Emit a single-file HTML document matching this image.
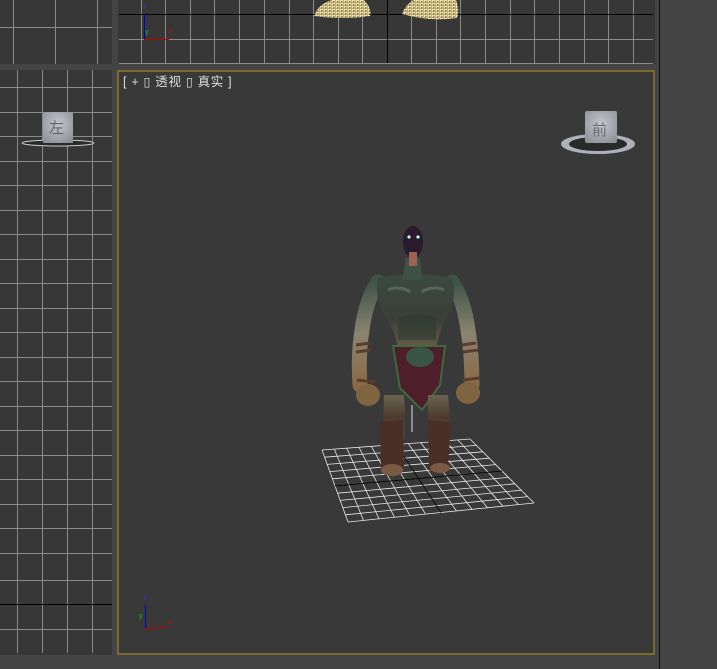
<!DOCTYPE html>
<html><head><meta charset="utf-8"><style>
html,body{margin:0;padding:0;width:717px;height:669px;overflow:hidden;background:#444;font-family:"Liberation Sans","Noto Sans CJK SC",sans-serif}
.abs{position:absolute}
</style></head><body>
<svg class="abs" style="left:0;top:0" width="717" height="669" viewBox="0 0 717 669">
<defs>
<linearGradient id="sk" x1="0" y1="0" x2="0" y2="1"><stop offset="0" stop-color="#3a4a40"/><stop offset="0.6" stop-color="#3a4036"/><stop offset="1" stop-color="#6a5e4a"/></linearGradient>
<linearGradient id="arm" x1="0" y1="0" x2="0" y2="1"><stop offset="0" stop-color="#3e5446"/><stop offset="0.5" stop-color="#8a8470"/><stop offset="1" stop-color="#8a6a44"/></linearGradient>
<linearGradient id="leg" x1="0" y1="0" x2="0" y2="1"><stop offset="0" stop-color="#6a6450"/><stop offset="0.5" stop-color="#4e3a2c"/><stop offset="1" stop-color="#6a4c38"/></linearGradient>
<radialGradient id="cube" cx="0.5" cy="0.4" r="0.7"><stop offset="0" stop-color="#c4c6cc"/><stop offset="1" stop-color="#8e9098"/></radialGradient>
<pattern id="wf" width="4" height="3" patternUnits="userSpaceOnUse"><rect width="4" height="3" fill="#8a7e58"/><path d="M0 0.5H3.5M0.5 0V2.5M2 2H4" stroke="#f2e2a4" stroke-width="1"/></pattern>
</defs>
<rect x="0" y="0" width="112" height="64" fill="#373737"/>
<g stroke="#8a8a8a" stroke-width="1">
<line x1="13.5" y1="0" x2="13.5" y2="64"/><line x1="55.5" y1="0" x2="55.5" y2="64"/><line x1="97.5" y1="0" x2="97.5" y2="64"/>
<line x1="0" y1="27.5" x2="112" y2="27.5"/>
</g>
<rect x="118" y="0" width="537" height="64" fill="#373737"/>
<g stroke="#8a8a8a" stroke-width="1">
<line x1="141.5" y1="0" x2="141.5" y2="63"/><line x1="165.5" y1="0" x2="165.5" y2="63"/><line x1="190.5" y1="0" x2="190.5" y2="63"/><line x1="214.5" y1="0" x2="214.5" y2="63"/><line x1="239.5" y1="0" x2="239.5" y2="63"/><line x1="264.5" y1="0" x2="264.5" y2="63"/><line x1="289.5" y1="0" x2="289.5" y2="63"/><line x1="313.5" y1="0" x2="313.5" y2="63"/><line x1="338.5" y1="0" x2="338.5" y2="63"/><line x1="362.5" y1="0" x2="362.5" y2="63"/><line x1="411.5" y1="0" x2="411.5" y2="63"/><line x1="436.5" y1="0" x2="436.5" y2="63"/><line x1="460.5" y1="0" x2="460.5" y2="63"/><line x1="485.5" y1="0" x2="485.5" y2="63"/><line x1="510.5" y1="0" x2="510.5" y2="63"/><line x1="534.5" y1="0" x2="534.5" y2="63"/><line x1="559.5" y1="0" x2="559.5" y2="63"/><line x1="584.5" y1="0" x2="584.5" y2="63"/><line x1="608.5" y1="0" x2="608.5" y2="63"/><line x1="633.5" y1="0" x2="633.5" y2="63"/>
<line x1="119" y1="39.5" x2="653" y2="39.5"/><line x1="119" y1="63.5" x2="653" y2="63.5"/>
</g>
<line x1="119" y1="14.5" x2="653" y2="14.5" stroke="#000"/>
<line x1="387.5" y1="0" x2="387.5" y2="63" stroke="#000"/>
<line x1="144.5" y1="14" x2="144.5" y2="40" stroke="#0000d0"/>
<line x1="144" y1="39.5" x2="169" y2="39.5" stroke="#c00000"/>
<text x="143" y="8" font-size="6" fill="#3030ff">z</text><text x="145" y="34" font-size="7" fill="#0c0">y</text><text x="169" y="33" font-size="7" fill="#d00">x</text>
<path d="M314 16 Q318 4 332 0 L364 0 Q372 8 370 16 Q344 20 314 16 Z" fill="url(#wf)"/>
<path d="M402 14 Q406 4 414 0 L456 0 Q460 10 457 18 Q430 22 402 14 Z" fill="url(#wf)"/>
<rect x="0" y="70" width="112" height="585" fill="#373737"/>
<g stroke="#8a8a8a" stroke-width="1">
<line x1="17.5" y1="70" x2="17.5" y2="653"/><line x1="42.5" y1="70" x2="42.5" y2="653"/><line x1="67.5" y1="70" x2="67.5" y2="653"/><line x1="92.5" y1="70" x2="92.5" y2="653"/>
<line x1="0" y1="87.5" x2="112" y2="87.5"/><line x1="0" y1="112.5" x2="112" y2="112.5"/><line x1="0" y1="136.5" x2="112" y2="136.5"/><line x1="0" y1="161.5" x2="112" y2="161.5"/><line x1="0" y1="185.5" x2="112" y2="185.5"/><line x1="0" y1="210.5" x2="112" y2="210.5"/><line x1="0" y1="234.5" x2="112" y2="234.5"/><line x1="0" y1="259.5" x2="112" y2="259.5"/><line x1="0" y1="283.5" x2="112" y2="283.5"/><line x1="0" y1="308.5" x2="112" y2="308.5"/><line x1="0" y1="332.5" x2="112" y2="332.5"/><line x1="0" y1="357.5" x2="112" y2="357.5"/><line x1="0" y1="381.5" x2="112" y2="381.5"/><line x1="0" y1="406.5" x2="112" y2="406.5"/><line x1="0" y1="430.5" x2="112" y2="430.5"/><line x1="0" y1="455.5" x2="112" y2="455.5"/><line x1="0" y1="479.5" x2="112" y2="479.5"/><line x1="0" y1="504.5" x2="112" y2="504.5"/><line x1="0" y1="528.5" x2="112" y2="528.5"/><line x1="0" y1="553.5" x2="112" y2="553.5"/><line x1="0" y1="580.5" x2="112" y2="580.5"/><line x1="0" y1="629.5" x2="112" y2="629.5"/>
</g>
<line x1="0" y1="604.5" x2="112" y2="604.5" stroke="#000"/>
<ellipse cx="58" cy="143" rx="36" ry="3" fill="#2a2a2a" stroke="#ccc" stroke-width="1"/>
<rect x="43" y="112" width="30" height="31" fill="url(#cube)"/>
<text x="49" y="133" font-size="15" fill="#666">左</text>
<rect x="118" y="71" width="536" height="583" fill="#393939" stroke="#7a6a2c" stroke-width="2"/>
<text x="123" y="86" font-size="12.5" fill="#ddd" letter-spacing="0.7" xml:space="preserve">[ + ▯ 透视 ▯ 真实 ]</text>
<ellipse cx="598" cy="144" rx="37" ry="10" fill="#aeb2b8"/>
<ellipse cx="598" cy="144" rx="29" ry="7" fill="#2a2a2a"/>
<rect x="585" y="111" width="32" height="32" fill="url(#cube)" rx="2"/>
<text x="592" y="135" font-size="15" fill="#6a6c72">前</text>
<g stroke="#e8e8e8" stroke-width="0.8" fill="none">
<path d="M322 450L348 522M334.3 449.1L363.5 520.4M346.7 448.2L379 518.8M359 447.3L394.5 517.3M371.3 446.3L410 515.7M383.7 445.4L425.5 514.1M396 444.5L441 512.5M408.3 443.6L456.5 510.9M420.7 442.7L472 509.3M433 441.8L487.5 507.8M445.3 440.8L503 506.2M457.7 439.9L518.5 504.6M470 439L534 503"/>
<path d="M322 450L470 439M324.6 457.2L476.4 445.4M327.2 464.4L482.8 451.8M329.8 471.6L489.2 458.2M332.4 478.8L495.6 464.6M335 486L502 471M337.6 493.2L508.4 477.4M340.2 500.4L514.8 483.8M342.8 507.6L521.2 490.2M345.4 514.8L527.6 496.6M348 522L534 503"/>
</g>
<path d="M335 486L502 471M396 444.5L441 512.5" stroke="#000" stroke-width="1"/>
<path d="M378 282 Q366 300 362 330 Q358 355 360 385" stroke="url(#arm)" stroke-width="15" fill="none" stroke-linecap="round"/>
<path d="M452 282 Q464 300 468 330 Q472 355 472 385" stroke="url(#arm)" stroke-width="15" fill="none" stroke-linecap="round"/>
<g stroke="#5a3c2e" stroke-width="3"><path d="M356 345L370 343M356 352L371 350M462 345L476 343M463 352L478 350M357 380L375 382M463 380L480 378"/></g>
<path d="M378 278 Q410 270 452 278 Q458 300 446 318 Q438 335 436 350 L398 350 Q396 330 386 318 Q374 300 378 278 Z" fill="url(#sk)"/>
<path d="M398 318 Q418 310 436 318 L436 340 L398 340 Z" fill="#2e3a30" opacity="0.6"/>
<path d="M388 290 Q400 285 410 292 M422 292 Q432 285 444 290" stroke="#6a7a66" stroke-width="3" fill="none" opacity="0.6"/>
<path d="M405 258 L420 258 L422 280 L403 280 Z" fill="#3d5244"/>
<ellipse cx="413" cy="242" rx="10" ry="16" fill="#2a1a2e"/>
<rect x="409" y="252" width="8" height="14" fill="#a06050"/>
<circle cx="409" cy="237" r="1.6" fill="#bfe"/><circle cx="418" cy="237" r="1.6" fill="#bfe"/>
<path d="M393 346 L445 346 L440 385 L422 410 L400 388 Z" fill="#4e1e2a" stroke="#3c6a3c" stroke-width="2"/>
<ellipse cx="420" cy="357" rx="14" ry="10" fill="#3a5446"/>
<path d="M384 395 Q383 420 384 440 L404 440 Q406 415 404 395 Z" fill="url(#leg)"/>
<path d="M428 395 Q427 420 429 440 L450 440 Q450 415 448 395 Z" fill="url(#leg)"/>
<path d="M380 422 L403 420 L404 468 Q394 478 381 472 Z" fill="#4a2e28"/>
<path d="M428 420 L451 422 L448 468 Q440 476 429 470 Z" fill="#4a2e28"/>
<ellipse cx="392" cy="470" rx="11" ry="6" fill="#7a5a44"/><ellipse cx="440" cy="468" rx="10" ry="5" fill="#7a5a44"/>
<ellipse cx="368" cy="395" rx="12" ry="11" fill="#7e6440"/>
<ellipse cx="468" cy="393" rx="12" ry="11" fill="#7e6440"/>
<line x1="412" y1="405" x2="412" y2="432" stroke="#ddd"/>
<line x1="145.5" y1="605" x2="145.5" y2="629" stroke="#0000d0"/>
<line x1="145" y1="628.5" x2="168" y2="627.5" stroke="#c00000"/>
<text x="144" y="600" font-size="6" fill="#3030ff">z</text><text x="139" y="618" font-size="7" fill="#0c0">y</text><text x="168" y="624" font-size="7" fill="#d00">x</text>
<line x1="659.5" y1="0" x2="659.5" y2="669" stroke="#111"/>
</svg>
</body></html>
